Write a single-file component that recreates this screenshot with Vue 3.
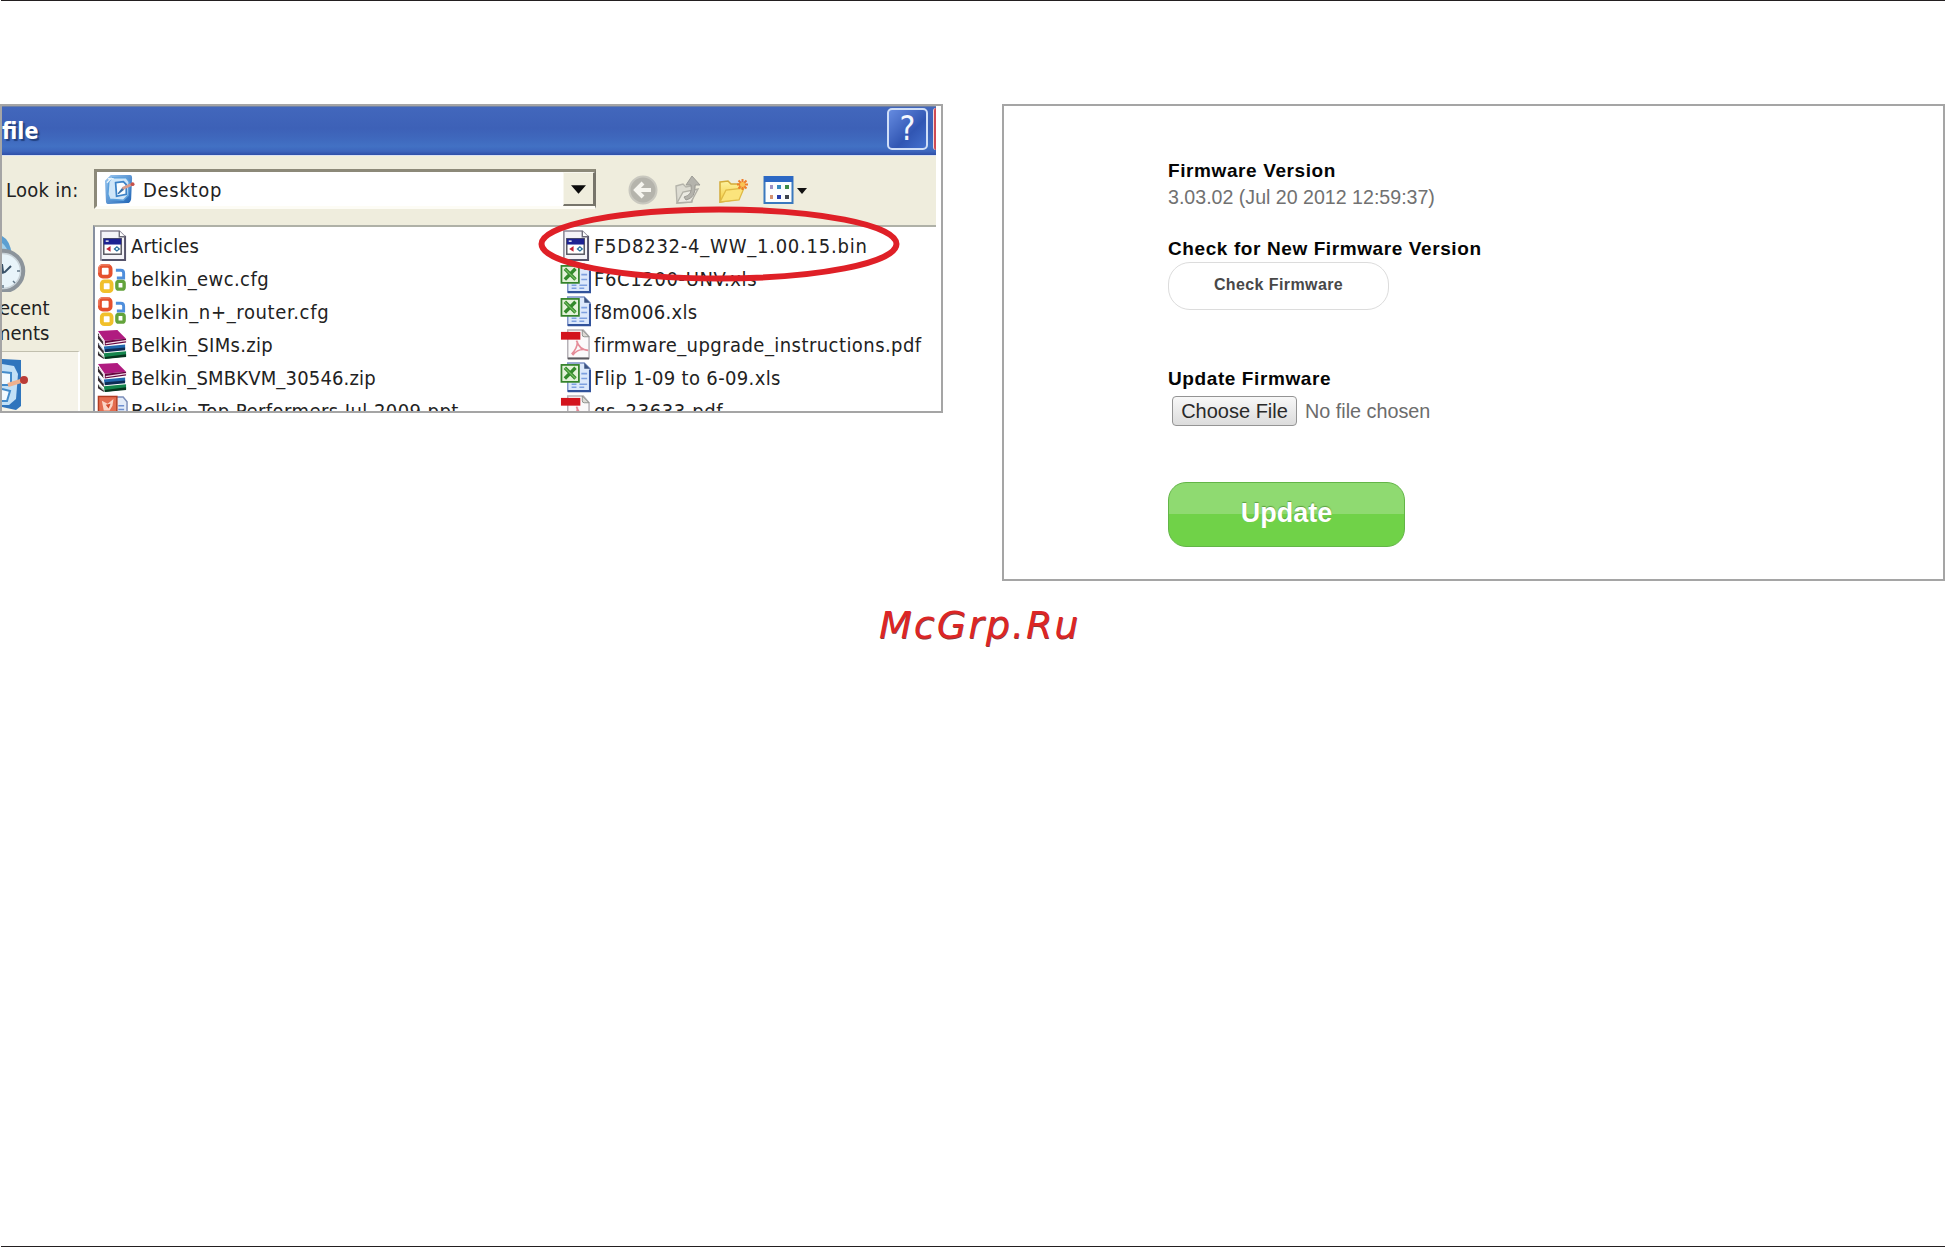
<template>
  <div class="page">
    <svg class="symbols" aria-hidden="true">
      <defs>
        <linearGradient id="blueSheet" x1="0" y1="0" x2="1" y2="1">
          <stop offset="0" stop-color="#9cc9f2" />
          <stop offset="1" stop-color="#1c62b4" />
        </linearGradient>
        <linearGradient id="folderFill" x1="0" y1="0" x2="0" y2="1">
          <stop offset="0" stop-color="#fdf3a0" />
          <stop offset="1" stop-color="#f5cb3c" />
        </linearGradient>
      </defs>
      <symbol id="icon-bin" viewBox="0 0 32 32">
        <path d="M4 1h19l6 6v24H4z" fill="#f4f3f8" stroke="#8a8796" stroke-width="1.6" />
        <path d="M29 6v25H5" fill="none" stroke="#55536a" stroke-width="2" />
        <path d="M23 1v6h6" fill="#fff" stroke="#6d6b78" stroke-width="1.4" />
        <rect x="7" y="9" width="18" height="16" fill="#fff" stroke="#55555f" stroke-width="1.5" />
        <rect x="7" y="9" width="18" height="6" fill="#1d2292" />
        <path d="M9 11.5h3" stroke="#fff" stroke-width="1.4" />
        <path d="M14 16.5v6l-4.500-3z" fill="#c32335" />
        <path d="M17 19.500l3.500-3 3.500 3-3.500 3z" fill="#2d6f9c" />
        <path d="M19.500 18.500h2v2h-2z" fill="#dff" />
      </symbol>
      <symbol id="icon-office" viewBox="0 0 32 32">
        <g fill="none">
          <rect x="3" y="3" width="11" height="11" rx="3" stroke="#e5502d" stroke-width="4" />
          <path d="M19.500 7.500h5q3 0 3 3v5h-7" stroke="#4e8edc" stroke-width="3" />
          <rect x="5" y="19" width="10" height="10" rx="2.500" stroke="#f1c02a" stroke-width="4" />
          <rect x="20.500" y="19" width="7.500" height="8" rx="2" stroke="#63a33b" stroke-width="3.500" />
          <path d="M2 10V5q0-3 3-3h8" stroke="#f39880" />
        </g>
      </symbol>
      <symbol id="icon-zip" viewBox="0 0 32 32">
        <path d="M1 4l6 9v4l-6-7zM1 14l6 8v4l-6-7zM1 23l6 5v3l-6-4z" fill="#33292e" />
        <path d="M1 2l20-1 9 9-22 2z" fill="#b01b80" />
        <path d="M8 12l22-2v4L8 17z" fill="#650840" />
        <path d="M2 6l5 7v3M9 15l21-3" fill="none" stroke="#f2dce9" stroke-width="1.300" />
        <path d="M7 18l22-2v4L8 23z" fill="#2168ad" />
        <path d="M8 21l21-2v3L8 24z" fill="#0d2c55" />
        <path d="M2 15l5 7" stroke="#c7dbef" stroke-width="1.300" />
        <path d="M7 25l23-2v5L8 31z" fill="#15864d" />
        <path d="M8 29l22-3v3L8 31z" fill="#06351e" />
        <path d="M2 24l5 5" stroke="#cfe8d8" stroke-width="1.300" />
      </symbol>
      <symbol id="icon-ppt" viewBox="0 0 32 32">
        <path d="M19 2h8l4 5v24H12V14" fill="#e3ebf8" stroke="#7b8db8" stroke-width="1.500" />
        <path d="M22 11h6M22 15h6" stroke="#6e8fd0" stroke-width="1.500" />
        <rect x="1.500" y="1.500" width="19" height="18" fill="#e46d4f" stroke="#b03c22" stroke-width="1.500" />
        <path d="M5 6l6 3 6-5-1 7-3 5H7z" fill="#fbd5c5" />
        <path d="M9 10l5-1-2 5z" fill="#d14b2c" />
      </symbol>
      <symbol id="icon-xls" viewBox="0 0 32 32">
        <path d="M8 1h17l6 6v23H8z" fill="#dce8fb" stroke="#7d93c8" stroke-width="1.500" />
        <path d="M31 8v22H8" fill="none" stroke="#31529b" stroke-width="2.200" />
        <path d="M25 1v6h6z" fill="#3d5482" />
        <path d="M22 12h6M22 17h6M12 23h5M20 23h8M12 26h5M20 26h5" stroke="#7ea0e0" stroke-width="1.600" />
        <rect x="1.500" y="3" width="18" height="17.500" fill="#e4f2da" stroke="#35832b" stroke-width="1.800" />
        <path d="M5 6l11 11M16 6L5 17" stroke="#338a2c" stroke-width="3.500" />
        <path d="M5 6l11 11" stroke="#77bd62" stroke-width="1.200" />
      </symbol>
      <symbol id="icon-pdf" viewBox="0 0 32 32">
        <path d="M8 1h16l6 7v22H8z" fill="#fbf9fa" stroke="#b5b1b7" stroke-width="1.500" />
        <path d="M23 1l7 7h-5q-2 0-2-2z" fill="#dcd9d4" stroke="#8e928d" />
        <path d="M8 30.500h22" stroke="#5c595e" stroke-width="2" />
        <rect x="1" y="3" width="20" height="8" fill="#d3141d" />
        <path d="M17 12c2 6 5 10 12 10-6-2-12 0-16 5M18 13c0 5-2 9-6 13" fill="none" stroke="#e58b98" stroke-width="1.700" />
      </symbol>
      <symbol id="icon-desktop" viewBox="0 0 32 32">
        <path d="M7 1h20q2 0 2 3l-1 22q-1 4-4 4l-19 1q-3 0-3-3L1 7z" fill="url(#blueSheet)" />
        <path d="M8 4h15l3 4-1 14-5 5-14-1-2-5 1-13z" fill="#cfe6f8" stroke="#5ba0dd" stroke-width="1.500" />
        <path d="M4 5h6M3 9l5-5" stroke="#e6f3fc" stroke-width="1.500" />
        <path d="M12 9l8-1 3 3v10l-10 2z" fill="#f7fcff" stroke="#3c83c8" stroke-width="1.800" />
        <path d="M14 20l5-6 2 2-6 5z" fill="#356fa8" />
        <path d="M19 15l9-4" stroke="#d89c8c" stroke-width="3" />
        <circle cx="29.500" cy="10.500" r="2" fill="#c6514b" />
      </symbol>
    </svg>

    <div class="rule"></div>

    <main class="figures">
      <section class="shot picker">
        <div class="dialog">
          <header class="titlebar">
            <h1>file</h1>
            <div class="caption-buttons">
              <span class="help">?</span>
              <span class="close"></span>
            </div>
          </header>

          <div class="toolbar">
            <label class="look-in">Look in:</label>
            <div class="combo">
              <svg class="combo-icon"><use href="#icon-desktop" /></svg>
              <span class="combo-value">Desktop</span>
              <span class="combo-arrow">
                <svg viewBox="0 0 16 9"><path d="M0 0h16L8 9z" fill="#0b0b0b" /></svg>
              </span>
            </div>
            <div class="tools">
              <svg class="tool" viewBox="0 0 30 30">
                <circle cx="15" cy="15" r="13.500" fill="#b5b4ac" stroke="#c9c8bf" stroke-width="2" />
                <path d="M23 15H9M15 8l-7 7 7 7" fill="none" stroke="#f6f5ef" stroke-width="4" />
              </svg>
              <svg class="tool" viewBox="0 0 30 30">
                <path d="M3 11l7-2 3 3 9-2-3 17-15 1z" fill="#dddcd2" stroke="#b5b4ab" stroke-width="1.400" />
                <path d="M4 28l6-11 15-3-7 13z" fill="#ebeae2" stroke="#b1b0a7" stroke-width="1.400" />
                <path d="M11 22q9-2 7-12h-5l6-9 8 9h-5q1 13-9 15z" fill="#b4b3ac" stroke="#9c9b95" />
              </svg>
              <svg class="tool" viewBox="0 0 30 30">
                <path d="M2 7l8-1 3 3h9l-2 15L2 27z" fill="url(#folderFill)" stroke="#d3ab38" stroke-width="1.500" />
                <path d="M2 27l6-12 18-2-5 12z" fill="#fbe47c" stroke="#dfba45" stroke-width="1.300" />
                <path d="M24.500 4v11M19 9.500h11M20.500 5.500l8 8M28.500 5.500l-8 8" stroke="#ef7d29" stroke-width="2" />
                <circle cx="24.500" cy="9.500" r="2.500" fill="#f9c455" />
              </svg>
              <svg class="tool views" viewBox="0 0 44 30">
                <rect x="1.500" y="2" width="28" height="26" fill="#fbfdfe" stroke="#3a79be" stroke-width="2" />
                <rect x="1" y="1" width="29" height="6" fill="#2c68c4" />
                <g>
                  <rect x="7" y="10" width="3" height="4" fill="#9c8fc3" />
                  <rect x="14" y="10" width="4" height="4" fill="#3a8cc1" />
                  <rect x="22" y="10" width="4" height="4" fill="#3d8b46" />
                  <rect x="7" y="20" width="3" height="4" fill="#d29070" />
                  <rect x="14" y="20" width="4" height="4" fill="#253dac" />
                  <rect x="22" y="20" width="4" height="4" fill="#3c434c" />
                </g>
                <path d="M34 13h10l-5 6z" fill="#111" />
              </svg>
            </div>
          </div>

          <div class="browser">
            <aside class="places">
              <svg class="place-clock" viewBox="0 0 24 58">
                <path d="M0 2q8 4 10 19H0z" fill="#5c9fd1" />
                <path d="M0 9q5 3 6 12H0z" fill="#a3d0ea" />
                <circle cx="1" cy="37" r="20" fill="#e8f4fa" stroke="#8c949b" stroke-width="4.500" />
                <circle cx="1" cy="37" r="17.500" fill="none" stroke="#c9d3d9" stroke-width="1.500" />
                <path d="M0 39l3-1 6-6M1 38l-1-8" fill="none" stroke="#395269" stroke-width="2" />
                <path d="M15 37h3M1 51v3M11 47l2 2" stroke="#64798a" stroke-width="1.500" />
              </svg>
              <span class="place-label">ecent</span>
              <span class="place-label second">ments</span>
              <div class="place-active">
                <svg viewBox="0 0 28 54">
                  <path d="M0 1l19 1v46l-5 4-14-3z" fill="#2f75bd" />
                  <path d="M0 6l12 2 4 8-2 25-7 6H0z" fill="#c2e0f6" />
                  <path d="M0 14l9 1v12H0M0 31l8 2-3 10H0" fill="#f2faff" stroke="#438bcb" stroke-width="2" />
                  <path d="M6 27l16-5" stroke="#efb18e" stroke-width="4" />
                  <circle cx="22" cy="22" r="4" fill="#bb3c37" />
                </svg>
              </div>
            </aside>

            <div class="file-list">
              <ul v-for="(column, index) in columns" :key="index" class="column">
                <li v-for="file in column" :key="file.name" class="file">
                  <svg class="file-icon"><use :href="`#icon-${file.icon}`" /></svg>
                  <span :style="{ letterSpacing: `${file.tracking}px` }">{{ file.name }}</span>
                </li>
              </ul>
            </div>
          </div>
        </div>
        <svg class="highlight" viewBox="0 0 362 78">
          <ellipse cx="181" cy="39" rx="177.500" ry="34.500" fill="none" stroke="#df2027" stroke-width="6" />
        </svg>
      </section>

      <section class="shot firmware">
        <h2>Firmware Version</h2>
        <p class="version">3.03.02 (Jul 20 2012 12:59:37)</p>
        <h2 class="check-title">Check for New Firmware Version</h2>
        <button type="button" class="check-btn">Check Firmware</button>
        <h2 class="update-title">Update Firmware</h2>
        <div class="upload">
          <button type="button" class="choose-btn">Choose File</button>
          <span>No file chosen</span>
        </div>
        <button type="button" class="update-btn">Update</button>
      </section>
    </main>

    <p class="watermark">McGrp.Ru</p>
    <div class="rule bottom"></div>
  </div>
</template>

<script setup>
const columns = [
  [
    { name: 'Articles', icon: 'bin', tracking: 0.1 },
    { name: 'belkin_ewc.cfg', icon: 'office', tracking: 0.4 },
    { name: 'belkin_n+_router.cfg', icon: 'office', tracking: 0.65 },
    { name: 'Belkin_SIMs.zip', icon: 'zip', tracking: 0.3 },
    { name: 'Belkin_SMBKVM_30546.zip', icon: 'zip', tracking: 0.17 },
    { name: 'Belkin_Top Performers Jul 2009.ppt', icon: 'ppt', tracking: 0.44 }
  ],
  [
    { name: 'F5D8232-4_WW_1.00.15.bin', icon: 'bin', tracking: 0.77 },
    { name: 'F6C1200-UNV.xls', icon: 'xls', tracking: 0.63 },
    { name: 'f8m006.xls', icon: 'xls', tracking: 0.3 },
    { name: 'firmware_upgrade_instructions.pdf', icon: 'pdf', tracking: 0.44 },
    { name: 'Flip 1-09 to 6-09.xls', icon: 'xls', tracking: 0.35 },
    { name: 'qs_23633.pdf', icon: 'pdf', tracking: 0.6 }
  ]
]
</script>

<style>
body {
  margin: 0;
  background: #fff;
}
</style>

<style scoped>
.page {
  display: flex;
  flex-direction: column;
  width: 1945px;
  height: 1247px;
  overflow: hidden;
  background: #fff;
  font-family: "Liberation Sans", Arial, sans-serif;
}

.page * {
  box-sizing: border-box;
}

.symbols {
  position: absolute;
  width: 0;
  height: 0;
}

.rule {
  flex: none;
  height: 1px;
  margin-left: 1px;
  background: #231f20;
}

.rule.bottom {
  margin-top: auto;
}

.figures {
  display: flex;
  align-items: flex-start;
  justify-content: space-between;
  height: 477px;
  margin-top: 103px;
}

.shot {
  position: relative;
  width: 943px;
  border: 2px solid #a5a5a5;
  background: #fff;
}

.picker {
  height: 309px;
  overflow: hidden;
  font-family: "DejaVu Sans Condensed", "DejaVu Sans", sans-serif;
  font-stretch: condensed;
  font-size: 20px;
  color: #222;
}

.dialog {
  display: flex;
  flex-direction: column;
  width: 934px;
  height: 305px;
  background: #efeddd;
}

.titlebar {
  display: flex;
  flex: none;
  justify-content: space-between;
  height: 50px;
  border-top: 1px solid #6c7fa8;
  border-bottom: 1px solid #d9e1f2;
  background: linear-gradient(180deg, #4267bc 0%, #3d61b7 45%, #3f68bd 65%, #4271c4 82%, #3d66bd 92%, #2f4fa8 100%);
}

.titlebar h1 {
  margin: 0;
  font-size: 23px;
  line-height: 48px;
  letter-spacing: 0;
  color: #fff;
  text-shadow: 2px 2px 1px #21407f;
}

.caption-buttons {
  display: flex;
  gap: 5px;
  padding-top: 1px;
}

.help {
  width: 41px;
  height: 42px;
  border: 2px solid #d1dff7;
  border-radius: 5px;
  background: linear-gradient(135deg, #658be0, #3156b3 60%, #4470ce);
  color: #f4f7fd;
  font-family: "DejaVu Sans", sans-serif;
  font-size: 33px;
  line-height: 38px;
  text-align: center;
}

.close {
  width: 3px;
  height: 42px;
  border-left: 1px solid #f1d9dc;
  border-radius: 4px 0 0 4px;
  background: #cf4a54;
}

.toolbar {
  display: flex;
  flex: none;
  height: 69px;
  padding-top: 13px;
}

.look-in {
  width: 92px;
  padding-left: 4px;
  line-height: 43px;
  letter-spacing: 0.3px;
}

.combo {
  display: flex;
  width: 502px;
  height: 40px;
  padding-left: 7px;
  border: 3px solid #fdfcf5;
  border-top-color: #8c8979;
  border-left-color: #8c8979;
  border-right: 1px solid #77756b;
  background: #fff;
}

.combo-icon {
  width: 31px;
  height: 31px;
  margin-top: 2px;
}

.combo-value {
  margin-left: 8px;
  line-height: 37px;
  letter-spacing: 0.7px;
}

.combo-arrow {
  display: grid;
  place-items: center;
  width: 32px;
  margin-left: auto;
  padding-top: 2px;
  border: 1px solid #f8f7ef;
  border-right: 2px solid #77756b;
  border-bottom: 2px solid #77756b;
  background: #efeddd;
}

.combo-arrow svg {
  width: 15px;
  height: 9px;
}

.tools {
  display: flex;
  gap: 15px;
  margin: 6px 0 0 32px;
}

.tool {
  width: 30px;
  height: 30px;
}

.tool.views {
  width: 44px;
}

.browser {
  display: flex;
  height: 186px;
}

.places {
  display: flex;
  flex-direction: column;
  width: 91px;
}

.place-clock {
  flex: none;
  width: 24px;
  height: 58px;
  margin-top: 9px;
}

.place-label {
  height: 25px;
  margin-left: -3px;
  line-height: 33px;
}

.place-label.second {
  margin-left: -9px;
}

.place-active {
  width: 78px;
  height: 69px;
  margin-top: 9px;
  padding-top: 6px;
  border-top: 1px solid #c1bfae;
  border-right: 2px solid #fff;
  background: #f5f3e9;
}

.place-active svg {
  width: 28px;
  height: 54px;
}

.file-list {
  display: flex;
  width: 843px;
  height: 186px;
  overflow: hidden;
  border-top: 2px solid #afb1a7;
  border-left: 2px solid #8790a0;
  background: #fff;
}

.column {
  flex: none;
  width: 463px;
  margin: 0;
  padding: 2px 0 0 2px;
  list-style: none;
}

.file {
  display: flex;
  gap: 3px;
  height: 33.1px;
  line-height: 35px;
  white-space: nowrap;
}

.file-icon {
  flex: none;
  width: 31px;
  height: 31px;
  margin-top: 1px;
}

.highlight {
  position: absolute;
  left: 535.5px;
  top: 98.5px;
  width: 362px;
  height: 78px;
}

.firmware {
  display: flex;
  flex-direction: column;
  align-items: flex-start;
  height: 477px;
  padding: 53px 0 0 164px;
}

h2 {
  margin: 0;
  color: #050505;
  font-size: 19px;
  font-weight: bold;
  line-height: 24px;
  letter-spacing: 0.6px;
  white-space: nowrap;
}

.version {
  margin: 1px 0 0;
  color: #717171;
  font-size: 19.6px;
  line-height: 26px;
}

.check-title {
  margin-top: 27px;
}

.check-btn {
  width: 221px;
  height: 48px;
  margin-top: 1px;
  padding: 0 0 2px;
  border: 1px solid #dcdcdc;
  border-radius: 22px;
  background: #fff;
  color: #484848;
  font: bold 16px "Liberation Sans", Arial, sans-serif;
  letter-spacing: 0.4px;
}

.update-title {
  margin-top: 57px;
}

.upload {
  display: flex;
  gap: 8px;
  margin: 5px 0 0 4px;
  color: #6c6c6c;
  font-size: 19.8px;
  line-height: 31px;
}

.choose-btn {
  width: 125px;
  height: 30px;
  padding: 0;
  border: 1px solid #949494;
  border-radius: 4px;
  background: linear-gradient(#f8f8f8, #dcdcdc);
  color: #292929;
  font: 20px "Liberation Sans", Arial, sans-serif;
}

.update-btn {
  width: 237px;
  height: 65px;
  margin-top: 55px;
  padding: 0 0 3px;
  border: 1px solid #63b547;
  border-radius: 18px;
  background: linear-gradient(#8fda71 0 50%, #70d248 50% 100%);
  color: #fff;
  font: bold 27px "Liberation Sans", Arial, sans-serif;
  text-shadow: 0 -1px 1px #5a9e41;
}

.watermark {
  width: 220px;
  margin: 20px 0 0 879px;
  color: #dc2626;
  font-family: "DejaVu Sans", sans-serif;
  font-size: 38px;
  font-style: italic;
  line-height: 48px;
  letter-spacing: 2px;
  text-shadow: 0.5px 0.5px 0 #8a3a3a;
}
</style>
